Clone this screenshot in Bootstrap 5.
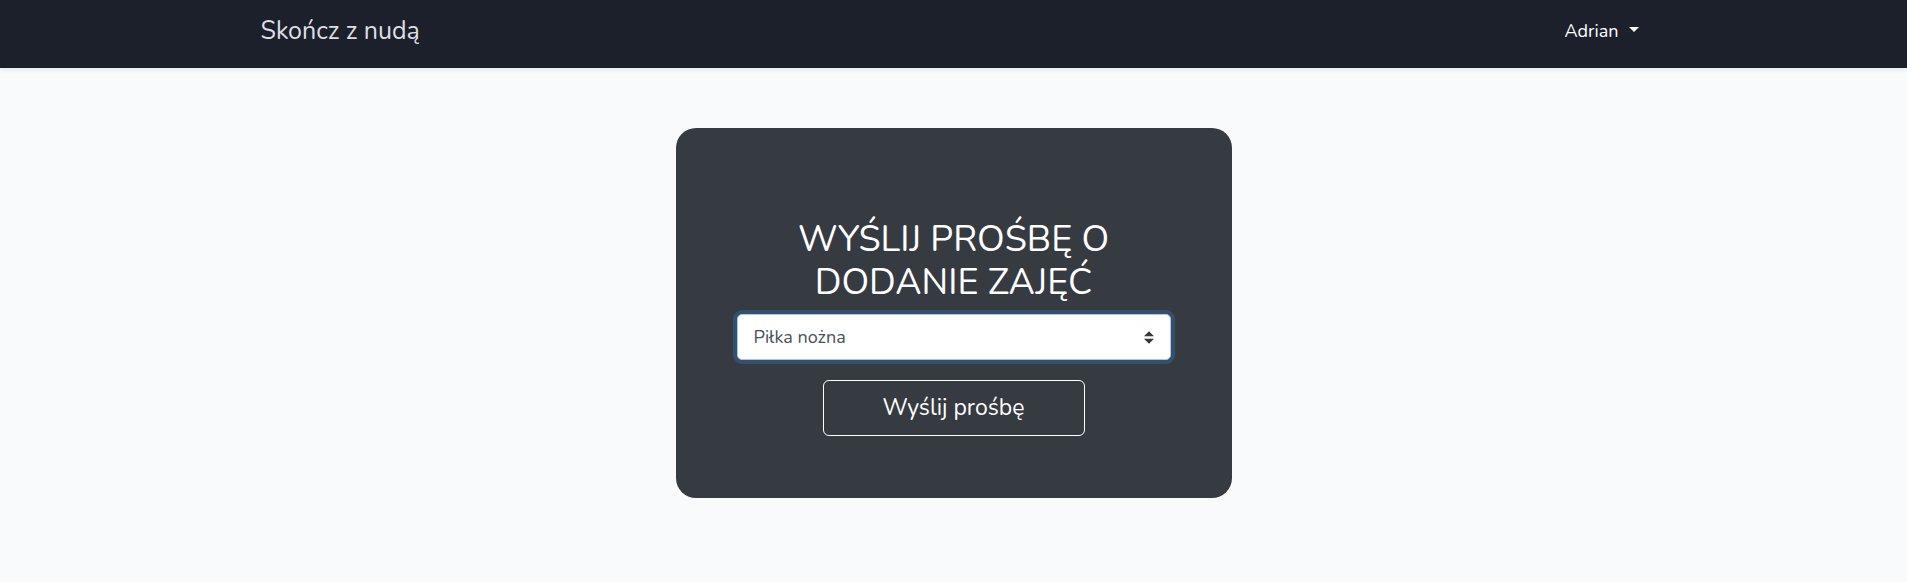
<!DOCTYPE html>
<html lang="pl">
<head>
<meta charset="utf-8">
<meta name="viewport" content="width=device-width, initial-scale=1">
<title>Skończ z nudą</title>
<link rel="stylesheet" href="https://cdn.jsdelivr.net/npm/bootstrap@5.3.0/dist/css/bootstrap.min.css">
<style>
  body { font-family: Nunito, Lato, "Liberation Sans", sans-serif; background: #f8fafc; }
  .site-nav { background: #1b202b; min-height: 68px; padding: 9px 0 15px; }
  .site-nav .container { max-width: 1410px; }
  .site-nav .navbar-brand { color: #dddfe1; font-size: 25px; line-height: 36px; padding: 4px 0; }
  .user-menu { color: #fff; font-size: 18px; line-height: 28px; padding: 8px; }
  .user-menu:hover { color: #fff; }
  .user-menu::after { margin-left: 10px; }
  .request-card { max-width: 556px; margin-top: 60px; padding: 90px 61px 62px; border-radius: 20px; background: #363a41; }
  .request-title { font-size: 36px; line-height: 43px; margin-bottom: 10px; }
  .activity-select {
    height: 46px; padding: 8px 16px; border-color: #a1cbef; border-radius: 5px; color: #495057; font-size: 18px;
    box-shadow: 0 0 0 4px #364f6b;
    background-image: url("data:image/svg+xml,%3csvg xmlns='http://www.w3.org/2000/svg' viewBox='0 0 4 5'%3e%3cpath fill='%23343a40' d='M2 0L0 2h4zm0 5L0 3h4z'/%3e%3c/svg%3e");
    background-position: right 16px center; background-size: 10px 13px;
  }
  .activity-select:focus { border-color: #a1cbef; box-shadow: 0 0 0 4px #364f6b; }
  .send-button { width: 262px; max-width: 100%; height: 56px; margin-top: 20px; font-size: 23px; line-height: 34px; border-radius: 6px; }
</style>
</head>
<body>
<nav class="navbar site-nav shadow-sm">
  <div class="container">
    <a class="navbar-brand" href="#">Skończ z nudą</a>
    <div class="dropdown">
      <a class="nav-link dropdown-toggle user-menu" href="#" role="button" data-bs-toggle="dropdown" aria-expanded="false">Adrian</a>
      <ul class="dropdown-menu dropdown-menu-end"></ul>
    </div>
  </div>
</nav>
<main class="px-3">
  <form class="request-card mx-auto text-center text-white">
    <h1 class="request-title fw-normal text-uppercase"><label for="activity">Wyślij prośbę o dodanie zajęć</label></h1>
    <select class="form-select activity-select" id="activity">
      <option selected>Piłka nożna</option>
    </select>
    <button class="btn btn-outline-light send-button text-white border-white" type="button">Wyślij prośbę</button>
  </form>
</main>
<script src="https://cdn.jsdelivr.net/npm/bootstrap@5.3.0/dist/js/bootstrap.bundle.min.js"></script>
</body>
</html>
